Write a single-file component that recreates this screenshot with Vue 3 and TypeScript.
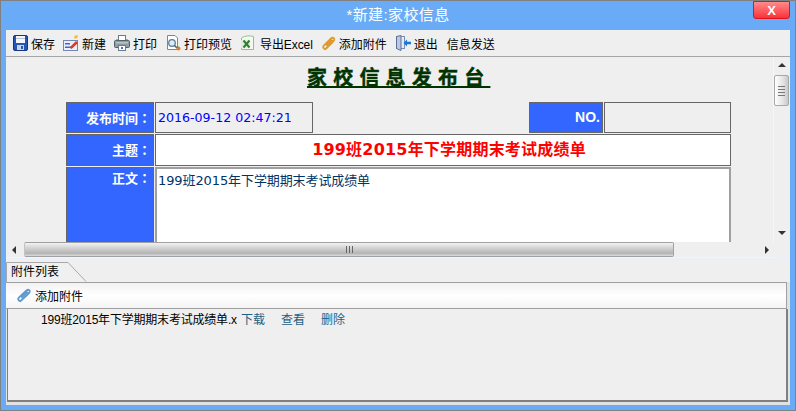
<script setup lang="ts">
const attachment = { name: '199班2015年下学期期末考试成绩单.x', actions: ['下载', '查看', '删除'] }
</script>

<template>
  <div class="window">
    <header class="titlebar">
      <span></span>
      <span class="title">*新建:家校信息</span>
      <button class="close">X</button>
    </header>
    <div class="inner">
      <nav class="toolbar">
        <span class="tool">
          <svg width="15" height="16" viewBox="0 0 15 16"><rect x="0.5" y="0.5" width="14" height="15" rx="1.5" fill="#2456b8" stroke="#16357c"/><rect x="3" y="1" width="9" height="7" fill="#f4f6fa"/><rect x="3" y="3" width="9" height="1" fill="#b4c2dc"/><rect x="4" y="10" width="7" height="5" fill="#c8d3e8"/><rect x="8" y="11" width="2" height="3" fill="#2456b8"/></svg>
          保存
        </span>
        <span class="tool t2">
          <svg width="16" height="16" viewBox="0 0 16 16"><rect x="0.5" y="5.5" width="14" height="10" fill="#e9eefa" stroke="#7186bd"/><rect x="2" y="8" width="5" height="1.5" fill="#3f68c4"/><rect x="2" y="11.5" width="8" height="1.5" fill="#3f68c4"/><path d="M6.5 12.5 L13 6 L15 8 L8.5 14 Z" fill="#e2391f"/><path d="M13 0 v3.5 M11 2 h4 M11.5 3.5 l3 -3" stroke="#f0b323" stroke-width="1"/></svg>
          新建
        </span>
        <span class="tool t3">
          <svg width="16" height="16" viewBox="0 0 16 16"><rect x="4.5" y="0.5" width="7" height="6" fill="#fff" stroke="#6a7a8a"/><rect x="0.5" y="5.5" width="15" height="7" rx="1" fill="#8f9ba6" stroke="#55606a"/><rect x="2" y="7" width="12" height="1.5" fill="#b7c2cb"/><rect x="4.5" y="10.5" width="7" height="5" fill="#fff" stroke="#6a7a8a"/><rect x="7" y="12" width="2" height="2" fill="#3b78c8"/><rect x="2" y="4.5" width="2" height="1" fill="#3b8a3b"/><rect x="12" y="4.5" width="2" height="1" fill="#3b8a3b"/></svg>
          打印
        </span>
        <span class="tool t4">
          <svg width="15" height="16" viewBox="0 0 15 16"><path d="M1.5 0.5 H9 L11.5 3 V14.5 H1.5 Z" fill="#fff" stroke="#7a8794"/><circle cx="6" cy="8" r="3.3" fill="#dcecf6" stroke="#5c7f99" stroke-width="1.3"/><path d="M8.5 10.5 L11 13" stroke="#4f6170" stroke-width="1.6"/><circle cx="12.5" cy="13.5" r="2" fill="#d9822b"/><circle cx="11.5" cy="12" r="1" fill="#5aa03c"/></svg>
          打印预览
        </span>
        <span class="tool t5">
          <svg width="15" height="16" viewBox="0 0 15 16"><path d="M1.5 3 C5 0.5, 10 0.5, 13.5 1.5 V14.5 H1.5 Z" fill="#f3f8f1" stroke="#8fc08f"/><path d="M1 5 H10 V13 H1 Z" fill="#dfeeda"/><path d="M3.5 5.5 L9.5 12.5 M9.5 5.5 L3.5 12.5" stroke="#2f7d32" stroke-width="2"/></svg>
          <span class="after-xls">导出Excel</span>
        </span>
        <span class="tool t6">
          <svg width="14" height="15" viewBox="0 0 14 15"><path d="M3 13.5 L11.5 5 C13.5 3 11 0.5 9 2.5 L1.8 9.7 C0.3 11.5 2.5 14 4.4 12.4 L10.5 6.3 C11.5 5 10 3.8 9 4.8 L4.3 9.6" fill="none" stroke="#dd9a2e" stroke-width="1.8"/></svg>
          添加附件
        </span>
        <span class="tool t7">
          <svg width="16" height="16" viewBox="0 0 16 16"><rect x="1.5" y="1.5" width="8" height="12" fill="#e6ebf4" stroke="#7d8db0"/><path d="M1.5 1.5 L6 0.5 V15.5 L1.5 13.5 Z" fill="#bcc8e0" stroke="#5e6f9a"/><path d="M8.5 8 L12 4.5 V6.7 H16 V9.3 H12 V11.5 Z" fill="#1279dd"/></svg>
          退出
        </span>
        <span class="tool t8">信息发送</span>
      </nav>

      <section class="content">
        <div class="page">
          <div class="doc">
            <h1 class="heading"><u>家校信息发布台</u></h1>
            <div class="form">
              <div class="label">发布时间<span class="colon">：</span></div>
              <div class="value date">2016-09-12 02:47:21</div>
              <div class="spacer"></div>
              <div class="label no">NO.</div>
              <div class="value"></div>

              <div class="label">主题<span class="colon">：</span></div>
              <div class="value subject">199班2015年下学期期末考试成绩单</div>

              <div class="label body-label">正文<span class="colon">：</span></div>
              <div class="value body">199班2015年下学期期末考试成绩单</div>
            </div>
          </div>
          <aside class="vbar">
            <svg class="arrow" width="8" height="5" viewBox="0 0 8 5"><path d="M4 0 L8 4 H0 Z" fill="#333"/></svg>
            <div class="vthumb"><i></i><i></i><i></i><i></i></div>
            <div class="grow"></div>
            <svg class="arrow" width="8" height="5" viewBox="0 0 8 5"><path d="M0 0 H8 L4 4 Z" fill="#333"/></svg>
          </aside>
        </div>
        <div class="hbar">
          <div class="hleft"><svg width="5" height="8" viewBox="0 0 5 8"><path d="M0 4 L4 0 V8 Z" fill="#333"/></svg></div>
          <div class="hthumb"><i></i><i></i><i></i></div>
          <div class="grow"></div>
          <svg class="hright" width="5" height="8" viewBox="0 0 5 8"><path d="M0 0 L4 4 L0 8 Z" fill="#333"/></svg>
        </div>
      </section>

      <section class="attach">
        <div class="tabstrip">
          <div class="tab">
            <svg class="tab-shape" width="81" height="20" viewBox="0 0 81 20"><path d="M0.5 20 V0.5 H62 L80 19.5" fill="#f0f0f0" stroke="#a8a8a8"/></svg>
            <span>附件列表</span>
          </div>
        </div>
        <div class="attach-tools">
          <svg width="15" height="15" viewBox="0 0 15 15"><path d="M3 13.5 L12 5 C14 3 11.5 0.5 9.5 2.5 L1.8 9.7 C0.3 11.5 2.5 14 4.4 12.4 L10.8 6.3 C11.8 5 10.3 3.8 9.3 4.8 L4.3 9.6" fill="none" stroke="#5f9ad0" stroke-width="1.8"/></svg>
          <span>添加附件</span>
        </div>
        <div class="list">
          <div class="row">
            <span class="file">{{ attachment.name }}</span>
            <a v-for="a in attachment.actions" :key="a" class="act">{{ a }}</a>
          </div>
        </div>
      </section>
    </div>
  </div>
</template>

<style>
html, body { margin: 0; overflow: hidden; }
</style>

<style scoped>
.window {
  width: 796px;
  height: 411px;
  box-sizing: border-box;
  background: #6aabf7;
  border: 1px solid #808080;
  display: flex;
  flex-direction: column;
  font-family: "Liberation Sans", "Noto Sans CJK SC", sans-serif;
  font-size: 12px;
  color: #000;
}
.titlebar {
  height: 29px;
  flex: none;
  display: grid;
  grid-template-columns: 1fr auto 1fr;
  align-items: start;
}
.title {
  color: #fff;
  font-size: 15px;
  line-height: 28px;
  letter-spacing: 0.4px;
}
.close {
  justify-self: end;
  width: 37px;
  height: 18px;
  margin-right: 5px;
  padding: 0;
  border: 1px solid #e0141e;
  border-radius: 0 0 3px 3px;
  background: linear-gradient(#ff8a8c, #ff5a5e 55%, #f4343a);
  color: #fff;
  font: bold 13px/17px "Liberation Sans", sans-serif;
}
.inner {
  flex: 1;
  margin: 0 5px 5px 5px;
  background: #efefef;
  display: flex;
  flex-direction: column;
  min-height: 0;
}
.toolbar {
  height: 27px;
  flex: none;
  box-sizing: border-box;
  border-bottom: 1px solid #a5a5a5;
  display: flex;
  align-items: center;
  padding-left: 7px;
}
.tool { display: inline-flex; align-items: center; gap: 3px; white-space: nowrap; }
.t2 { margin-left: 8px; }
.t3 { margin-left: 8px; }
.t4 { margin-left: 9px; }
.t5 { margin-left: 8px; }
.after-xls { margin-left: 2px; letter-spacing: -0.1px; }
.t6 { margin-left: 9px; }
.t7 { margin-left: 8px; }
.t8 { margin-left: 9px; }
.content { flex: none; height: 201px; display: flex; flex-direction: column; }
.page { height: 185px; flex: none; display: flex; overflow: hidden; }
.doc { flex: 1; overflow: hidden; }
.heading {
  margin: 0;
  height: 45px;
  box-sizing: border-box;
  padding: 7px 0 0 301px;
  font-size: 20px;
  line-height: 28px;
  font-weight: 700;
  letter-spacing: 6.2px;
  color: #003300;
  -webkit-text-stroke: 0.4px #003300;
}
.form {
  margin-left: 60px;
  width: 665px;
  display: grid;
  grid-template-columns: 88px 158px 1fr 74px 127px;
  grid-template-rows: 31px 32px 78px;
  gap: 1px;
}
.label {
  background: #3366ff;
  border: 1px solid #666;
  box-sizing: border-box;
  color: #fff;
  font-size: 13px;
  font-weight: 700;
  text-align: right;
  line-height: 29px;
  padding-right: 2px;
}
.colon { font-family: "Noto Sans CJK JP", sans-serif; }
.value {
  border: 1px solid #666;
  box-sizing: border-box;
  line-height: 29px;
  font-family: "DejaVu Sans", "Noto Sans CJK SC", sans-serif;
  font-size: 13px;
  padding-left: 2px;
}
.date { color: #0000ff; font-size: 12.6px; }
.no { font-size: 14px; padding-right: 2px; }
.subject {
  grid-column: 2 / 6;
  background: #fff;
  color: #ff0000;
  font-size: 16px;
  font-weight: 700;
  letter-spacing: 0.2px;
  text-align: center;
  padding-left: 12px;
}
.body-label { line-height: 20px; }
.body {
  grid-column: 2 / 6;
  background: #fff;
  border: 2px solid #a0a0a0;
  color: #003366;
  line-height: 24px;
  padding-left: 1px;
  letter-spacing: -0.1px;
}
.vbar {
  width: 16px;
  flex: none;
  margin-right: 1px;
  border-left: 1px solid #f6f6f6;
  display: flex;
  flex-direction: column;
  align-items: center;
  padding: 6px 0 6px;
  box-sizing: border-box;
}
.arrow { flex: none; }
.vthumb {
  margin-top: 7px;
  width: 15px;
  height: 31px;
  box-sizing: border-box;
  border: 1px solid #a8a8a8;
  border-radius: 2px;
  background: linear-gradient(90deg, #fff, #e4e4e4 60%, #c8c8c8);
  display: flex;
  flex-direction: column;
  align-items: center;
  justify-content: center;
  gap: 2px;
}
.vthumb i { width: 7px; height: 1px; background: #777; }
.grow { flex: 1; }
.hbar {
  height: 16px;
  flex: none;
  width: 768px;
  display: flex;
  align-items: center;
  border-bottom: 1px solid #f4f4f4;
  box-sizing: border-box;
}
.hleft { width: 18px; flex: none; padding-left: 6px; box-sizing: border-box; display: flex; }
.hthumb {
  width: 650px;
  height: 15px;
  flex: none;
  box-sizing: border-box;
  border: 1px solid #a0a0a0;
  border-left-color: #c4c4c4;
  border-radius: 2px;
  background: linear-gradient(#f2f2f2, #c6c6c6 55%, #b4b4b4 80%, #dcdcdc);
  display: flex;
  align-items: center;
  justify-content: center;
  gap: 2px;
}
.hthumb i { width: 1px; height: 7px; background: #666; }
.hright { margin-right: 4px; }
.attach {
  flex: 1;
  display: flex;
  flex-direction: column;
  min-height: 0;
  background: #e2e2e2;
  border-top: 1px solid #eaf0fb;
}
.tabstrip {
  height: 23px;
  flex: none;
  box-sizing: border-box;
  background: #efefef;
  display: flex;
  align-items: flex-end;
}
.tab {
  position: relative;
  width: 81px;
  height: 20px;
  line-height: 20px;
  padding-left: 5px;
  box-sizing: border-box;
}
.tab span { position: relative; }
.tab-shape { position: absolute; left: 0; top: 0; }
.attach-tools {
  height: 27px;
  flex: none;
  margin-right: 3px;
  box-sizing: border-box;
  border: 1px solid #a0a0a0;
  border-left: 0;
  background: linear-gradient(#f2f2f2, #fff 50%, #f4f4f4);
  display: flex;
  align-items: center;
  gap: 3px;
  padding-left: 11px;
}
.list {
  flex: none;
  height: 93px;
  margin-left: 1px;
  margin-right: 2px;
  box-sizing: border-box;
  border: 1px solid #808080;
  border-width: 0 2px 2px 1px;
  background: #efefef;
}
.row { display: flex; padding: 3px 0 0 33px; line-height: 16px; }
.file { width: 200px; overflow: hidden; white-space: nowrap; letter-spacing: -0.2px; }
.act { color: #1f5f85; width: 40px; }
</style>
